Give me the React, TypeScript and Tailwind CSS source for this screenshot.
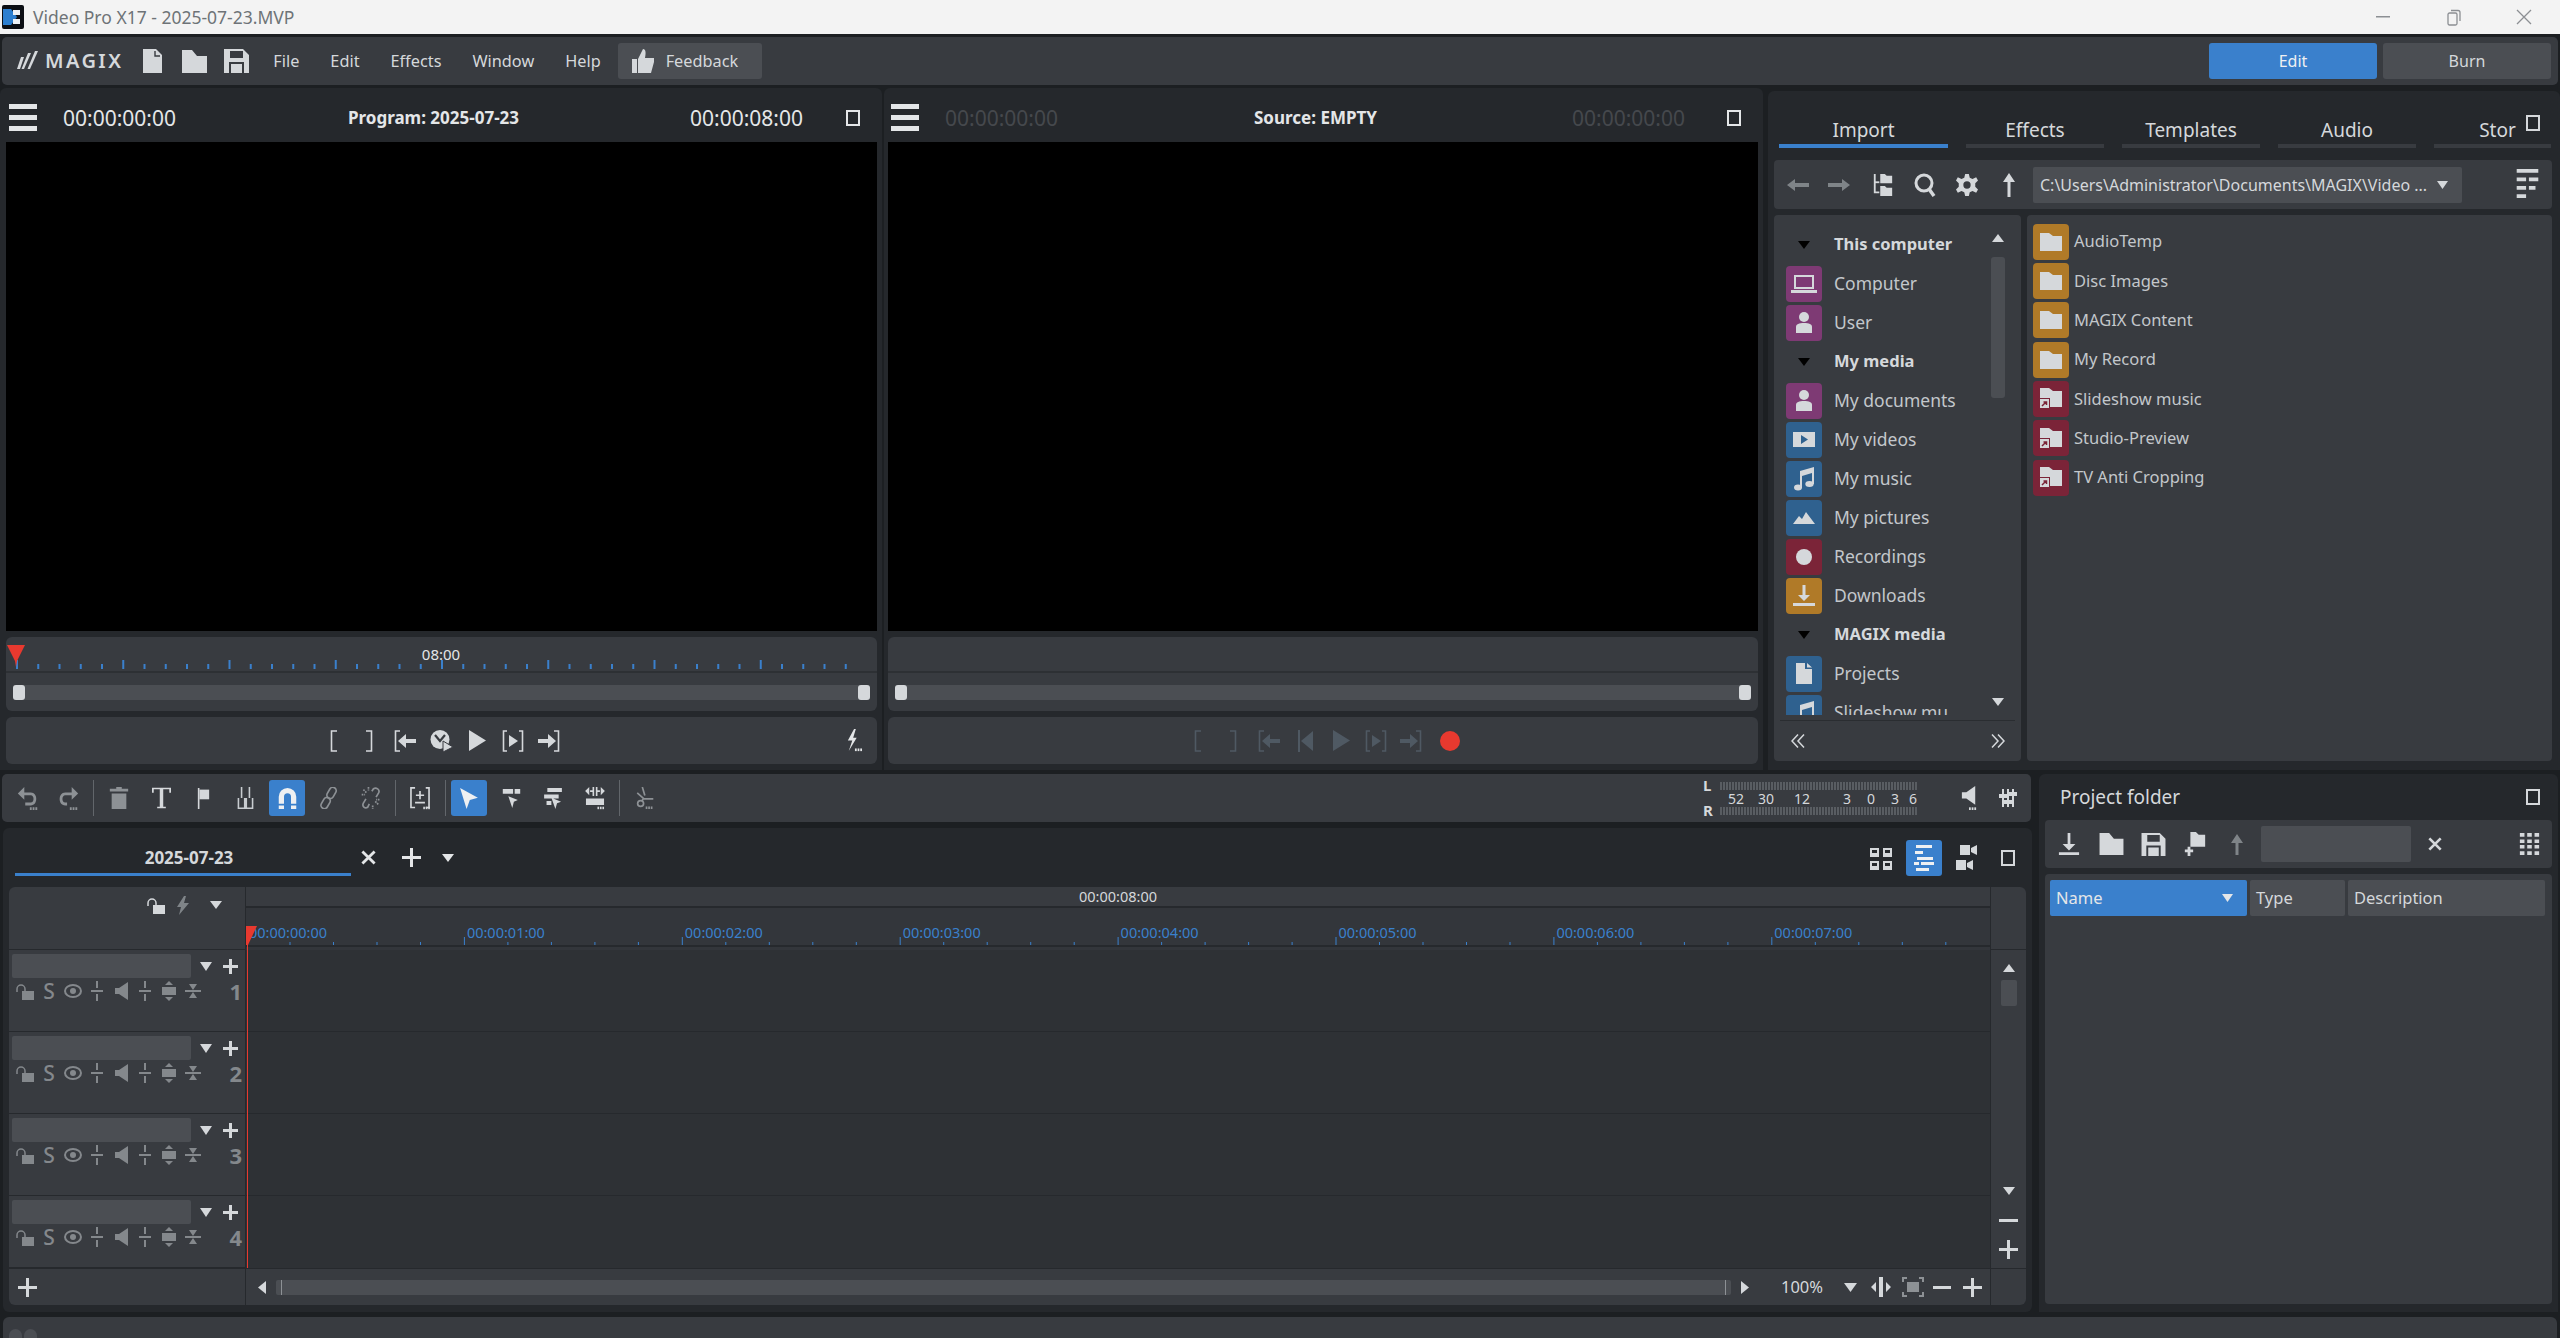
import React from "react";

type SP = { w: number; h: number; vb?: string; className?: string; children: React.ReactNode };
function S({ w, h, vb, className, children }: SP) {
  return (
    <svg width={w} height={h} viewBox={vb ?? `0 0 ${w} ${h}`} fill="currentColor" className={className ?? "shrink-0"}>
      {children}
    </svg>
  );
}
const Dots = ({ x, y }: { x: number; y: number }) => (
  <g>
    <rect x={x} y={y} width="2" height="3" />
    <rect x={x + 3} y={y} width="2" height="3" />
    <rect x={x + 6} y={y} width="2" height="3" />
  </g>
);
const Caret = ({ w = 14, h = 9, up = false }: { w?: number; h?: number; up?: boolean }) => (
  <S w={w} h={h}>
    <path d={up ? `M0 ${h}L${w / 2} 0L${w} ${h}z` : `M0 0H${w}L${w / 2} ${h}z`} />
  </S>
);
const Plus = ({ s = 20, t = 3 }: { s?: number; t?: number }) => (
  <S w={s} h={s}>
    <rect x={(s - t) / 2} width={t} height={s} />
    <rect y={(s - t) / 2} width={s} height={t} />
  </S>
);
const Cross = ({ s = 16 }: { s?: number }) => (
  <S w={s} h={s} vb="0 0 16 16">
    <path d="M1.5 1.5L14.5 14.5M14.5 1.5L1.5 14.5" stroke="currentColor" strokeWidth="3" />
  </S>
);
const Square = () => (
  <S w={14} h={16}>
    <rect x="1" y="1" width="12" height="14" fill="none" stroke="currentColor" strokeWidth="2" />
  </S>
);
const Hamburger = () => (
  <S w={28} h={27}>
    <rect width="28" height="5" />
    <rect y="11" width="28" height="5" />
    <rect y="22" width="28" height="5" />
  </S>
);
const FileIc = () => (
  <S w={19} h={24}>
    <path d="M0 0H13L19 6V24H0z" />
    <path d="M12 2V7H17" fill="none" stroke="#383b40" strokeWidth="1.4" />
  </S>
);
const FolderIc = ({ w = 25, h = 23 }: { w?: number; h?: number }) => (
  <S w={w} h={h} vb="0 0 25 23">
    <path d="M0 0H10L15 6H25V23H0z" />
  </S>
);
const SaveIc = ({ w = 25, h = 24 }: { w?: number; h?: number }) => (
  <S w={w} h={h} vb="0 0 25 24">
    <path fillRule="evenodd" d="M0 0H19L25 6V24H0zM6 2V9H19V2zM5 13H20V24H18V15H7V24H5z" />
  </S>
);
const ThumbIc = () => (
  <S w={22} h={24} vb="0 0 22 24">
    <path d="M0 10H5V24H0zM6 10L11 0C14 0 14 4 13 9H22V13L19 24H6z" />
  </S>
);
const UpArrow = ({ h = 24, dim = false }: { h?: number; dim?: boolean }) => (
  <S w={14} h={h} className={dim ? "shrink-0 text-[#7f8488]" : "shrink-0"}>
    <path d={`M7 0L13 9H8.5V${h}H5.5V9H1z`} />
  </S>
);

/* folder glyphs for the browser panel */
const GFolder = () => (
  <S w={22} h={18} vb="0 0 22 18">
    <path d="M0 0H9L13 3H22V18H0z" />
  </S>
);
const GShortcut = () => (
  <S w={22} h={21} vb="0 0 22 21">
    <path d="M0 0H9L13 3H22V19H0z" />
    <rect x="-1" y="10" width="11" height="11" fill="#7b2438" />
    <rect y="11" width="9" height="9" />
    <path d="M2 18L6 14M3.5 14H6.5V17" stroke="#7b2438" strokeWidth="1.5" fill="none" />
  </S>
);
const GLaptop = () => (
  <S w={26} h={18} vb="0 0 26 18">
    <path fillRule="evenodd" d="M3 0H23V14H3zM5 2V12H21V2z" />
    <path d="M0 15H26V18H0z" />
  </S>
);
const GUser = () => (
  <S w={16} h={21} vb="0 0 16 21">
    <circle cx="8" cy="5" r="5" />
    <path d="M0 21V15C0 12 3 11 8 11S16 12 16 15V21z" />
  </S>
);
const GVideo = () => (
  <S w={22} h={15} vb="0 0 22 15">
    <path fillRule="evenodd" d="M0 0H22V15H0zM8 3V12L15 7.5z" />
  </S>
);
const GMusic = () => (
  <S w={20} h={24} vb="0 0 20 24">
    <path d="M6 4L20 0V17H18V6L8 9V21H6z" />
    <ellipse cx="4" cy="20.5" rx="4" ry="3" />
    <ellipse cx="15.5" cy="17" rx="4.2" ry="3" />
  </S>
);
const GPic = () => (
  <S w={22} h={12} vb="0 0 22 12">
    <path d="M0 12L6 4L9 7L13 0L22 12z" />
  </S>
);
const GRec = () => (
  <S w={16} h={16}>
    <circle cx="8" cy="8" r="8" />
  </S>
);
const GDown = () => (
  <S w={22} h={21} vb="0 0 22 21">
    <path d="M9.5 0H12.5V10H17L11 16L5 10H9.5z" />
    <rect y="18" width="22" height="3" />
  </S>
);
const GDoc = () => (
  <S w={16} h={21} vb="0 0 16 21">
    <path d="M0 0H9V6H16V21H0zM11 0L16 4.5H11z" />
  </S>
);

type Row = { h?: string; t?: string; g?: React.ReactNode; c?: string };
const tree: Row[] = [
  { h: "This computer" },
  { t: "Computer", g: <GLaptop />, c: "bg-[#7e3a74]" },
  { t: "User", g: <GUser />, c: "bg-[#7e3a74]" },
  { h: "My media" },
  { t: "My documents", g: <GUser />, c: "bg-[#7e3a74]" },
  { t: "My videos", g: <GVideo />, c: "bg-[#2f618f]" },
  { t: "My music", g: <GMusic />, c: "bg-[#2f618f]" },
  { t: "My pictures", g: <GPic />, c: "bg-[#2f618f]" },
  { t: "Recordings", g: <GRec />, c: "bg-[#7b2438]" },
  { t: "Downloads", g: <GDown />, c: "bg-[#b07a28]" },
  { h: "MAGIX media" },
  { t: "Projects", g: <GDoc />, c: "bg-[#2f618f]" },
  { t: "Slideshow mu", g: <GMusic />, c: "bg-[#2f618f]" },
];
const files: [string, boolean][] = [
  ["AudioTemp", false],
  ["Disc Images", false],
  ["MAGIX Content", false],
  ["My Record", false],
  ["Slideshow music", true],
  ["Studio-Preview", true],
  ["TV Anti Cropping", true],
];

/* transport glyphs */
const BrL = () => (
  <S w={7} h={22}>
    <path d="M7 1H1.5V21H7" fill="none" stroke="currentColor" strokeWidth="1.6" />
  </S>
);
const BrR = () => (
  <S w={7} h={22}>
    <path d="M0 1H5.5V21H0" fill="none" stroke="currentColor" strokeWidth="1.6" />
  </S>
);
const GoIn = () => (
  <S w={22} h={22}>
    <path d="M6 1H1.5V21H6" fill="none" stroke="currentColor" strokeWidth="1.6" />
    <path d="M4 11L12 4V9H22V13H12V18z" />
  </S>
);
const GoOut = () => (
  <S w={22} h={22}>
    <path d="M16 1H20.5V21H16" fill="none" stroke="currentColor" strokeWidth="1.6" />
    <path d="M18 11L10 4V9H0V13H10V18z" />
  </S>
);
const Clock = () => (
  <S w={23} h={22}>
    <circle cx="10" cy="9.5" r="9.5" />
    <path d="M5 5L10 11L15 5" fill="none" stroke="#383b40" strokeWidth="2.2" />
    <path d="M13 11L23 17L13 22z" stroke="#383b40" strokeWidth="1" />
  </S>
);
const PlayT = () => (
  <S w={17} h={21}>
    <path d="M0 0L17 10.5L0 21z" />
  </S>
);
const PlayBr = () => (
  <S w={22} h={22}>
    <path d="M5 1H1.5V21H5M17 1H20.5V21H17" fill="none" stroke="currentColor" strokeWidth="1.6" />
    <path d="M7 5L16 11L7 17z" />
  </S>
);
const PrevFrame = () => (
  <S w={15} h={22}>
    <rect width="2" height="22" />
    <path d="M15 1V21L3 11z" />
  </S>
);
const Bolt = () => (
  <S w={19} h={23} vb="0 0 19 26">
    <path d="M9 0L2 13H7L3 25L12 10H8L11 0z" />
    <Dots x={10} y={22} />
  </S>
);

function Monitor({ title, a, b, dim, panelW, source }: { title: string; a: string; b: string; dim?: boolean; panelW: string; source?: boolean }) {
  const ticks = Array.from({ length: 40 }, (_, i) => i);
  return (
    <div className={`${panelW} h-[682px] bg-[#25282c] rounded-t-[6px] flex flex-col shrink-0`}>
      <div className="h-[54px] pt-[5px] flex items-center text-[#e4e6e8] shrink-0">
        <div className={source ? "ml-[7px]" : "ml-[9px]"}>
          <Hamburger />
        </div>
        <div className={`ml-[26px] w-[114px] text-[21px] leading-[28px] ${dim ? "text-[#45484d]" : ""}`}>{a}</div>
        <div className={`flex-1 text-center font-bold text-[17px] leading-[24px]`}>{title}</div>
        <div className={`w-[114px] text-[21px] leading-[28px] ${dim ? "text-[#45484d]" : ""}`}>{b}</div>
        <div className={source ? "ml-[41px] mr-[22px]" : "ml-[42px] mr-[22px]"}>
          <Square />
        </div>
      </div>
      <div className={`${source ? "ml-[4px] w-[870px]" : "ml-[6px] w-[871px]"} h-[489px] bg-black shrink-0`} />
      <div className={`${source ? "ml-[4px] w-[870px]" : "ml-[6px] w-[871px]"} mt-[6px] h-[74px] bg-[#383b40] rounded-[6px] flex flex-col shrink-0`}>
        <div className="h-[36px] border-b-2 border-[#2d3034] shrink-0">
          {!source && (
            <svg width="869" height="34" viewBox="0 0 869 34" className="block text-[#e4e6e8]">
              {ticks.map((i) => (
                <rect key={i} x={10 + i * 21.25} y={i % 5 === 0 ? 23 : 27} width="2" height={i % 5 === 0 ? 9 : 5} fill="#3a80cc" />
              ))}
              <text x="435" y="23" textAnchor="middle" fontSize="15" fill="#e4e6e8">08:00</text>
              <path d="M1 8H19L11 24L10 30L9 24z" fill="#e8392f" />
            </svg>
          )}
        </div>
        <div className="mt-[12px] mx-[7px] h-[15px] bg-[#4b4e53] flex justify-between rounded-[2px]">
          <div className="w-[12px] h-[15px] bg-[#d5d8db] rounded-[3px]" />
          <div className="w-[12px] h-[15px] bg-[#d5d8db] rounded-[3px]" />
        </div>
      </div>
      <div className={`${source ? "ml-[4px] w-[870px]" : "ml-[6px] w-[871px]"} mt-[6px] h-[47px] bg-[#383b40] rounded-[6px] flex items-center shrink-0`}>
        {source ? (
          <div className="flex items-center ml-[291px] text-[#4f5963]">
            <div className="w-[36px] flex justify-center"><BrL /></div>
            <div className="w-[36px] flex justify-center"><BrR /></div>
            <div className="w-[36px] flex justify-center"><GoIn /></div>
            <div className="w-[36px] flex justify-center"><PrevFrame /></div>
            <div className="w-[36px] flex justify-center"><PlayT /></div>
            <div className="w-[34px] flex justify-center"><PlayBr /></div>
            <div className="w-[36px] flex justify-center"><GoOut /></div>
            <div className="ml-[11px] w-[20px] h-[20px] rounded-full bg-[#e8392f]" />
          </div>
        ) : (
          <>
            <div className="flex items-center ml-[309px] text-[#d5d8db]">
              <div className="w-[36px] flex justify-center"><BrL /></div>
              <div className="w-[36px] flex justify-center"><BrR /></div>
              <div className="w-[36px] flex justify-center"><GoIn /></div>
              <div className="w-[36px] flex justify-center"><Clock /></div>
              <div className="w-[36px] flex justify-center"><PlayT /></div>
              <div className="w-[36px] flex justify-center"><PlayBr /></div>
              <div className="w-[36px] flex justify-center"><GoOut /></div>
            </div>
            <div className="ml-auto mr-[13px] text-[#e4e6e8]"><Bolt /></div>
          </>
        )}
      </div>
    </div>
  );
}

function TreePanel() {
  return (
    <div className="w-[247px] h-[546px] bg-[#383b40] rounded-[4px] flex flex-col shrink-0">
      <div className="h-[505px] pt-[10px] flex">
        <div className="w-[208px] h-[490px] overflow-hidden shrink-0">
          {tree.map((r, i) =>
            r.h ? (
              <div key={i} className="h-[39px] flex items-center">
                <div className="w-[60px] flex justify-center"><Caret w={12} h={8} /></div>
                <div className="font-bold text-[16.5px] text-[#d5d8db]">{r.h}</div>
              </div>
            ) : (
              <div key={i} className="h-[39px] flex items-center">
                <div className={`ml-[12px] w-[36px] h-[36px] rounded-[4px] ${r.c} text-[#d5d8db] flex items-center justify-center`}>{r.g}</div>
                <div className="ml-[12px] text-[17.5px] text-[#c3c7cb] whitespace-nowrap">{r.t}</div>
              </div>
            )
          )}
        </div>
        <div className="w-[24px] ml-[4px] flex flex-col items-center h-[490px] text-[#d5d8db]">
          <div className="mt-[9px]"><Caret w={12} h={8} up /></div>
          <div className="mt-[15px] w-[14px] h-[141px] bg-[#4b4e53] rounded-[3px]" />
          <div className="mt-[300px]"><Caret w={12} h={8} /></div>
        </div>
      </div>
      <div className="h-[1px] mx-[6px] bg-[#2a2d31]" />
      <div className="flex-1 flex items-center justify-between pl-[17px] pr-[16px] text-[#d5d8db]">
        <svg width="14" height="14" viewBox="0 0 14 14" fill="none" stroke="currentColor" strokeWidth="1.5"><path d="M7 0.5L1 7L7 13.5M13 0.5L7 7L13 13.5" /></svg>
        <svg width="14" height="14" viewBox="0 0 14 14" fill="none" stroke="currentColor" strokeWidth="1.5"><path d="M1 0.5L7 7L1 13.5M7 0.5L13 7L7 13.5" /></svg>
      </div>
    </div>
  );
}

function Browser() {
  return (
    <div className="relative w-[792px] h-[679px] mt-[3px] ml-[5px] bg-[#25282c] rounded-t-[6px] flex flex-col shrink-0">
      <div className="pt-[19px] pl-[11px] flex gap-[18px] text-[19px] text-[#d5d8db]">
        <div className="w-[169px] h-[38px] pt-[7px] border-b-[4px] border-[#3a80cc] text-center leading-[26px]">Import</div>
        <div className="w-[138px] h-[38px] pt-[7px] border-b-[4px] border-[#383b40] text-center leading-[26px]">Effects</div>
        <div className="w-[138px] h-[38px] pt-[7px] border-b-[4px] border-[#383b40] text-center leading-[26px]">Templates</div>
        <div className="w-[138px] h-[38px] pt-[7px] border-b-[4px] border-[#383b40] text-center leading-[26px]">Audio</div>
        <div className="w-[117px] h-[38px] pt-[7px] border-b-[4px] border-[#383b40] text-center leading-[26px] pl-[10px]">Stor</div>
      </div>
      <div className="absolute top-[24px] left-[758px] text-[#d5d8db]"><Square /></div>
      <div className="mt-[12px] ml-[6px] w-[778px] h-[49px] bg-[#383b40] rounded-[4px] flex items-center text-[#d5d8db] shrink-0">
        <div className="w-[48px] flex justify-center text-[#7f8488]">
          <S w={22} h={14}><path d="M0 7L8 1V5H22V9H8V13z" /></S>
        </div>
        <div className="w-[34px] flex justify-center text-[#7f8488]">
          <S w={22} h={14}><path d="M22 7L14 1V5H0V9H14V13z" /></S>
        </div>
        <div className="w-[42px] ml-[6px] flex justify-center">
          <S w={20} h={22} vb="0 0 20 24">
            <path d="M1 0V20H6" fill="none" stroke="currentColor" strokeWidth="2" />
            <path d="M1 9H6" stroke="currentColor" strokeWidth="2" />
            <path d="M7 0H12L14 2H20V10H7zM7 13H12L14 15H20V24H7z" />
          </S>
        </div>
        <div className="w-[42px] flex justify-center">
          <S w={22} h={24}>
            <circle cx="10" cy="10" r="8" fill="none" stroke="currentColor" strokeWidth="3" />
            <path d="M15 16L20 23" stroke="currentColor" strokeWidth="3.5" />
          </S>
        </div>
        <div className="w-[42px] flex justify-center">
          <S w={22} h={22} vb="0 0 24 24">
            <path fillRule="evenodd" d="M10 0H14L15 4L18 5.5L22 3.5L24 7L21 10V14L24 17L22 20.5L18 18.5L15 20L14 24H10L9 20L6 18.5L2 20.5L0 17L3 14V10L0 7L2 3.5L6 5.5L9 4zM12 8A4 4 0 1 0 12 16A4 4 0 1 0 12 8z" />
          </S>
        </div>
        <div className="w-[42px] flex justify-center"><UpArrow h={24} /></div>
        <div className="ml-[3px] w-[429px] h-[36px] bg-[#4b4e53] rounded-[2px] flex items-center pl-[7px] text-[16px] text-[#d5d8db] whitespace-nowrap">
          <span className="w-[397px] overflow-hidden">C:\Users\Administrator\Documents\MAGIX\Video ...</span>
          <Caret w={11} h={8} />
        </div>
        <div className="ml-[54px]">
          <S w={23} h={31} vb="0 0 23 33">
            <path d="M0 0H23V4H0zM0 9H10V13H0zM13 9H23V13H13zM0 18H10V22H0zM13 18H20V22H13zM0 27H10V31H0z" />
          </S>
        </div>
      </div>
      <div className="mt-[6px] ml-[6px] flex gap-[6px]">
        <TreePanel />
        <div className="w-[525px] h-[546px] bg-[#383b40] rounded-[4px] pt-[7px] shrink-0">
          {files.map(([t, s]) => (
            <div key={t} className="h-[39.33px] flex items-center">
              <div className={`ml-[6px] w-[36px] h-[36px] rounded-[4px] ${s ? "bg-[#7b2438]" : "bg-[#b07a28]"} text-[#d5d8db] flex items-center justify-center`}>
                {s ? <GShortcut /> : <GFolder />}
              </div>
              <div className="ml-[5px] text-[16.5px] text-[#c3c7cb]">{t}</div>
            </div>
          ))}
        </div>
      </div>
    </div>
  );
}

const Sep = ({ cls }: { cls: string }) => <div className={`w-[1px] h-[36px] bg-[#62666b] shrink-0 ${cls}`} />;
const Slot = ({ w, children, cls }: { w: string; children: React.ReactNode; cls?: string }) => (
  <div className={`${w} flex items-center justify-center shrink-0 ${cls ?? ""}`}>{children}</div>
);

function Toolbar() {
  return (
    <div className="w-[2029px] h-[48px] bg-[#383b40] rounded-[5px] flex items-center pl-[6px] text-[#8d9195]">
      <Slot w="w-[40px]">
        <S w={24} h={24} vb="0 0 24 26">
          <path d="M8 1L1 8L8 15V10H15C19 10 19 18 15 18H9V21H15C23 21 23 7 15 7H8z" />
          <Dots x={14} y={23} />
        </S>
      </Slot>
      <Slot w="w-[40px]">
        <S w={24} h={24} vb="0 0 24 26">
          <path d="M16 1L23 8L16 15V10H9C5 10 5 18 9 18H11V21H9C1 21 1 7 9 7H16z" />
          <Dots x={14} y={23} />
        </S>
      </Slot>
      <Sep cls="ml-[5px]" />
      <Slot w="w-[42px]" cls="ml-[4px]">
        <S w={20} h={22} vb="0 0 20 24">
          <path d="M7 0H13V2H20V5H0V2H7zM2 7H18V24H2z" />
        </S>
      </Slot>
      <Slot w="w-[42px]" cls="text-[#d5d8db]">
        <S w={19} h={22} vb="0 0 22 24">
          <path d="M0 0H22V6H20V2H13V22H16V24H6V22H9V2H2V6H0z" />
        </S>
      </Slot>
      <Slot w="w-[42px]" cls="text-[#d5d8db]">
        <S w={13} h={21} vb="0 0 14 26">
          <rect width="2" height="26" />
          <path d="M2 2H14V14H2z" />
        </S>
      </Slot>
      <Slot w="w-[42px]" cls="text-[#c8ccd0]">
        <S w={19} h={22} vb="0 0 20 28">
          <path d="M4 0H6V14H4zM14 0H16V14H14z" />
          <path d="M1 14V27H9V14M11 14V27H19V14" fill="none" stroke="currentColor" strokeWidth="2" />
        </S>
      </Slot>
      <div className="ml-[3px] w-[36px] h-[36px] bg-[#3a80cc] rounded-[3px] flex items-center justify-center text-[#eef0f2] shrink-0">
        <S w={19} h={21} vb="0 0 20 24">
          <path d="M0 10A10 10 0 0 1 20 10V18H14V10A4 4 0 0 0 6 10V18H0z" />
          <rect y="20" width="6" height="4" />
          <rect x="14" y="20" width="6" height="4" />
        </S>
      </div>
      <Slot w="w-[42px]" cls="ml-[3px]">
        <S w={22} h={22} vb="0 0 22 26">
          <g fill="none" stroke="currentColor" strokeWidth="2">
            <rect x="10" y="0" width="8" height="14" rx="4" transform="rotate(30 14 7)" />
            <rect x="3" y="12" width="8" height="14" rx="4" transform="rotate(30 7 19)" />
          </g>
        </S>
      </Slot>
      <Slot w="w-[42px]">
        <S w={22} h={22} vb="0 0 24 26">
          <g fill="none" stroke="currentColor" strokeWidth="2">
            <path d="M13 5L15 2C18 0 23 3 21 7L18 12" />
            <path d="M10 20L8 24C5 26 1 23 3 19L6 14" />
            <path d="M3 3L7 7M1 9H5M9 0V4M17 17L21 21M22 15H18M14 22V26" strokeDasharray="2 1" />
          </g>
        </S>
      </Slot>
      <Sep cls="ml-[3px]" />
      <Slot w="w-[40px]" cls="ml-[4px] text-[#d5d8db]">
        <S w={22} h={23} vb="0 0 24 28">
          <path d="M6 1H1V25H6M19 1H23V25H19" fill="none" stroke="currentColor" strokeWidth="2" />
          <path d="M11 5H13V9H17V11H13V15H11V11H7V9H11zM6 18H18V20H6z" />
          <Dots x={16} y={24} />
        </S>
      </Slot>
      <Sep cls="ml-[5px]" />
      <div className="ml-[5px] w-[36px] h-[36px] bg-[#3a80cc] rounded-[3px] flex items-center justify-center text-[#eef0f2] shrink-0">
        <S w={20} h={21} vb="0 0 22 26">
          <path d="M0 0L22 12L12 15L8 26z" />
        </S>
      </div>
      <Slot w="w-[42px]" cls="ml-[3px] text-[#d5d8db]">
        <S w={21} h={19} vb="0 0 22 24">
          <path d="M0 0H13V6H0zM15 0H22V6H15zM7 9L19 14L14 16L12 24z" />
        </S>
      </Slot>
      <Slot w="w-[42px]" cls="text-[#d5d8db]">
        <S w={22} h={21} vb="0 0 22 26">
          <path d="M4 0H22V5H4zM0 8H18V13H0zM3 16H9V21H3zM9 12L21 17L16 19L14 26z" />
        </S>
      </Slot>
      <Slot w="w-[42px]" cls="text-[#d5d8db]">
        <S w={22} h={23} vb="0 0 24 28">
          <path d="M0 5L5 0V10zM24 5L19 0V10zM9 0H11V11H9zM13 0H15V11H13zM6 4H9V6H6zM15 4H18V6H15zM1 14H23V22H1z" />
          <Dots x={15} y={24} />
        </S>
      </Slot>
      <Sep cls="ml-[3px]" />
      <Slot w="w-[40px]" cls="ml-[4px]">
        <S w={22} h={22} vb="0 0 24 26">
          <path d="M10 0L13 10M4 7L12 14M12 14H23M8 16A3.5 3.5 0 1 0 8 23A3.5 3.5 0 1 0 8 16M12 13L9 17" fill="none" stroke="currentColor" strokeWidth="2" />
          <Dots x={14} y={23} />
        </S>
      </Slot>

      <div className="ml-auto flex items-center">
        <svg width="222" height="42" viewBox="0 0 222 42" className="shrink-0 block">
          <defs>
            <pattern id="led" width="3" height="8" patternUnits="userSpaceOnUse">
              <rect width="2" height="8" fill="#595d62" />
            </pattern>
          </defs>
          <text x="1" y="14" fontSize="15" fontWeight="700" fill="#d5d8db">L</text>
          <text x="1" y="39" fontSize="15" fontWeight="700" fill="#d5d8db">R</text>
          <rect x="17" y="5" width="198" height="8" fill="url(#led)" />
          <rect x="17" y="30" width="198" height="8" fill="url(#led)" />
          {[["52", 34], ["30", 64], ["12", 100], ["3", 145], ["0", 169], ["3", 193], ["6", 211]].map(([t, x], i) => (
            <text key={i} x={x as number} y="27" fontSize="14" textAnchor="middle" fill="#d5d8db">{t}</text>
          ))}
        </svg>
        <div className="ml-[37px] text-[#d5d8db]">
          <S w={16} h={24} vb="0 0 16 27">
            <path d="M0 7H5L15 0V21L5 14H0z" />
            <Dots x={8} y={24} />
          </S>
        </div>
        <div className="ml-[22px] mr-[14px] text-[#d5d8db]">
          <S w={18} h={18}>
            <path d="M3 0H5V18H3zM8 0H10V18H8zM13 0H15V18H13z" />
            <path d="M0 5H8V9H0zM10 3H18V7H10zM5 11H13V15H5z" />
          </S>
        </div>
      </div>
    </div>
  );
}

function RulerSvg() {
  const labels = ["00:00:00:00", "00:00:01:00", "00:00:02:00", "00:00:03:00", "00:00:04:00", "00:00:05:00", "00:00:06:00", "00:00:07:00"];
  return (
    <svg width="1744" height="42" viewBox="0 0 1744 42" className="block">
      <rect y="37" width="1744" height="2" fill="#26292d" />
      {labels.map((t, i) => (
        <g key={t}>
          <rect x={i * 217.9} y="29" width="1" height="8" fill="#3a80cc" />
          {[1, 2, 3, 4].map((k) => (
            <rect key={k} x={i * 217.9 + k * 43.5} y="34" width="1" height="3" fill="#3a80cc" />
          ))}
          <text x={i * 217.9 + 3} y="30" fontSize="14.5" fill="#3a80cc">{t}</text>
        </g>
      ))}
    </svg>
  );
}

function Track({ n, h }: { n: number; h: string }) {
  return (
    <div className={`${h} border-b border-[#26292d] shrink-0 overflow-hidden`}>
      <div className="flex items-center mt-[4px]">
        <div className="ml-[3px] w-[179px] h-[24px] bg-[#4b4e53] rounded-[2px]" />
        <div className="ml-[9px] text-[#d5d8db]"><Caret w={12} h={9} /></div>
        <div className="ml-[11px] text-[#d5d8db]"><Plus s={15} t={3} /></div>
      </div>
      <div className="flex items-center mt-[2px] h-[22px] pl-[4px] pr-[3px] text-[#84888c]">
        <Slot w="w-[24px]">
          <S w={18} h={17}>
            <path d="M1 9V6A4 4 0 0 1 9 6V8" fill="none" stroke="currentColor" strokeWidth="1.5" />
            <rect x="6" y="8" width="12" height="9" />
          </S>
        </Slot>
        <Slot w="w-[24px]"><span className="text-[21px] font-medium leading-[22px]">S</span></Slot>
        <Slot w="w-[24px]">
          <S w={18} h={14}>
            <ellipse cx="9" cy="7" rx="8" ry="6" fill="none" stroke="currentColor" strokeWidth="2" />
            <circle cx="9" cy="7" r="3" />
          </S>
        </Slot>
        <Slot w="w-[24px]">
          <S w={12} h={20}>
            <path d="M5 0H7V7H5zM5 13H7V20H5zM0 9H12V11H0z" />
          </S>
        </Slot>
        <Slot w="w-[24px]">
          <S w={13} h={18}>
            <path d="M0 6H4L13 0V18L4 12H0z" />
          </S>
        </Slot>
        <Slot w="w-[24px]">
          <S w={12} h={20}>
            <path d="M5 0H7V7H5zM5 13H7V20H5zM0 9H12V11H0z" />
          </S>
        </Slot>
        <Slot w="w-[24px]">
          <S w={16} h={20}>
            <path d="M8 0L12 4H4zM8 20L12 16H4zM1 6H15V14H1z" />
          </S>
        </Slot>
        <Slot w="w-[24px]">
          <S w={16} h={18}>
            <path d="M8 8L4 2H12zM8 10L4 16H12zM0 8H16V10H0z" />
          </S>
        </Slot>
        <span className="ml-auto text-[22px] font-bold leading-[22px] w-[14px] text-right">{n}</span>
      </div>
    </div>
  );
}

function Timeline() {
  return (
    <div className="mt-[6px] ml-[1px] w-[2029px] h-[484px] bg-[#25282c] rounded-[6px] flex flex-col">
      <div className="h-[59px] flex items-start text-[#e4e6e8] shrink-0">
        <div className="ml-[12px] mt-[16px] w-[336px] h-[32px] border-b-[3px] border-[#3a80cc] text-center font-bold text-[17px] leading-[28px] pl-[12px] text-[#d5d8db]">2025-07-23</div>
        <div className="ml-[10px] mt-[22px]"><Cross s={15} /></div>
        <div className="ml-[26px] mt-[20px]"><Plus s={19} t={3} /></div>
        <div className="ml-[21px] mt-[26px]"><Caret w={12} h={8} /></div>
        <div className="ml-auto mt-[20px] text-[#d5d8db]">
          <S w={22} h={22}>
            <path fillRule="evenodd" d="M0 0H9V9H0zM2 2V5H7V2zM13 0H22V9H13zM15 2V5H20V2zM0 13H9V22H0zM2 15V18H7V15zM13 13H22V22H13zM15 15V18H20V15z" />
          </S>
        </div>
        <div className="ml-[14px] mt-[12px] w-[36px] h-[36px] bg-[#3a80cc] rounded-[3px] flex items-center justify-center text-[#eef0f2]">
          <S w={22} h={26}>
            <path d="M3 0H19V3H3zM2 6H10V9H2zM4 12H20V15H4zM1 17H6V20H1zM8 17H21V20H8zM3 23H16V26H3z" />
          </S>
        </div>
        <div className="ml-[14px] mt-[17px] text-[#d5d8db]">
          <S w={22} h={27}>
            <path d="M4 0H14V10H4zM15 3L21 0V10L15 7zM0 15H10V25H0zM11 18L17 15V25L11 22z" />
          </S>
        </div>
        <div className="ml-[23px] mr-[17px] mt-[22px] text-[#d5d8db]"><Square /></div>
      </div>
      <div className="ml-[6px] w-[2017px] h-[418px] rounded-[6px] overflow-hidden flex flex-col bg-[#383b40] shrink-0">
        <div className="flex h-[381px]">
          <div className="w-[236px] shrink-0 flex flex-col text-[#d5d8db]">
            <div className="h-[63px] flex items-start border-b border-[#26292d] shrink-0">
              <div className="ml-[138px] mt-[10px]">
                <S w={18} h={17}>
                  <path d="M1 9V6A4 4 0 0 1 9 6V8" fill="none" stroke="currentColor" strokeWidth="1.5" />
                  <rect x="6" y="8" width="12" height="9" />
                </S>
              </div>
              <div className="ml-[12px] mt-[9px] text-[#7f8488]">
                <S w={12} h={19}><path d="M7 0L0 11H4L2 19L12 7H7L9 0z" /></S>
              </div>
              <div className="ml-[21px] mt-[14px]"><Caret w={12} h={8} /></div>
            </div>
            <Track n={1} h="h-[82px]" />
            <Track n={2} h="h-[82px]" />
            <Track n={3} h="h-[82px]" />
            <Track n={4} h="h-[72px]" />
          </div>
          <div className="relative w-[1745px] shrink-0 border-l border-[#26292d] flex flex-col">
            <div className="h-[19px] border-b-2 border-[#26292d] text-center text-[14.5px] leading-[18px] text-[#d5d8db] shrink-0 box-content">00:00:08:00</div>
            <div className="h-[42px] bg-[#33363b] shrink-0"><RulerSvg /></div>
            <div className="flex-1 bg-[#2e3135] flex flex-col">
              <div className="h-[82px] border-b border-[#26292d]" />
              <div className="h-[82px] border-b border-[#26292d]" />
              <div className="h-[82px] border-b border-[#26292d]" />
            </div>
            <svg width="12" height="342" viewBox="0 0 12 342" className="absolute left-0 top-[39px]">
              <path d="M0 0H11L2 19V342H1V19H0z" fill="#e8392f" />
            </svg>
          </div>
          <div className="w-[36px] shrink-0 border-l border-[#26292d] flex flex-col items-center text-[#d5d8db]">
            <div className="h-[63px] w-full border-b border-[#26292d] shrink-0" />
            <div className="mt-[14px]"><Caret w={12} h={8} up /></div>
            <div className="mt-[8px] w-[16px] h-[26px] bg-[#4b4e53] rounded-[2px]" />
            <div className="mt-[181px]"><Caret w={12} h={8} /></div>
            <div className="mt-[24px] w-[19px] h-[3px] bg-[#d5d8db]" />
            <div className="mt-[18px]"><Plus s={19} t={3} /></div>
          </div>
        </div>
        <div className="flex-1 flex border-t border-[#26292d] text-[#d5d8db]">
          <div className="w-[236px] shrink-0 flex items-center pl-[9px]"><Plus s={19} t={3} /></div>
          <div className="flex-1 border-l border-[#26292d] flex items-center">
            <div className="ml-[12px]"><S w={8} h={13}><path d="M8 0V13L0 6.5z" /></S></div>
            <div className="ml-[10px] w-[1455px] h-[15px] bg-[#4b4e53] rounded-[2px] flex justify-between px-[5px]">
              <div className="w-[1px] h-[15px] bg-[#8d9195]" />
              <div className="w-[1px] h-[15px] bg-[#8d9195]" />
            </div>
            <div className="ml-[10px]"><S w={8} h={13}><path d="M0 0V13L8 6.5z" /></S></div>
            <div className="ml-[31px] w-[44px] text-[16.5px] leading-[20px] text-center whitespace-nowrap">100%</div>
            <div className="ml-[20px]"><Caret w={13} h={9} /></div>
            <div className="ml-[14px]">
              <S w={20} h={20}><path d="M0 10L5 5V15zM20 10L15 5V15zM8 0H12V20H8z" /></S>
            </div>
            <div className="ml-[11px] text-[#8d9195]">
              <S w={22} h={20}><path d="M5 5H17V15H5zM0 0H5V2H2V5H0zM22 0H17V2H20V5H22zM0 20H5V18H2V15H0zM22 20H17V18H20V15H22z" /></S>
            </div>
            <div className="ml-[9px] w-[18px] h-[3px] bg-[#d5d8db]" />
            <div className="ml-[12px]"><Plus s={19} t={3} /></div>
          </div>
          <div className="w-[36px] shrink-0 border-l border-[#26292d]" />
        </div>
      </div>
    </div>
  );
}

function ProjectFolder() {
  return (
    <div className="ml-[6px] w-[519px] h-[538px] bg-[#25282c] rounded-t-[6px] flex flex-col shrink-0">
      <div className="h-[46px] flex items-center text-[19px] text-[#d5d8db] shrink-0">
        <div className="ml-[21px]">Project folder</div>
        <div className="ml-auto mr-[18px]"><Square /></div>
      </div>
      <div className="ml-[6px] w-[507px] h-[48px] bg-[#383b40] rounded-[4px] flex items-center text-[#d5d8db] shrink-0">
        <Slot w="w-[42px]" cls="ml-[3px]">
          <S w={22} h={22} vb="0 0 22 24"><path d="M9.5 0H12.5V12H18L11 19L4 12H9.5zM0 21H22V24H0z" /></S>
        </Slot>
        <Slot w="w-[42px]"><FolderIc w={25} h={22} /></Slot>
        <Slot w="w-[42px]"><SaveIc w={25} h={23} /></Slot>
        <Slot w="w-[42px]">
          <S w={22} h={24} vb="0 0 22 26">
            <path d="M6 0H12L15 3H22V16H6z" />
            <path d="M3 16H6V19H9V22H6V26H3V22H0V19H3z" />
          </S>
        </Slot>
        <Slot w="w-[42px]"><UpArrow h={21} dim /></Slot>
        <div className="ml-[3px] w-[150px] h-[36px] bg-[#4b4e53] rounded-[2px] shrink-0" />
        <div className="ml-[17px]"><Cross s={14} /></div>
        <div className="ml-auto mr-[12px]">
          <S w={21} h={22} vb="0 0 21 24">
            <path d="M0 0H5V4H0zM8 0H13V4H8zM16 0H21V4H16zM0 7H5V11H0zM8 7H13V11H8zM16 7H21V11H16zM0 13H5V17H0zM8 13H13V17H8zM16 13H21V17H16zM0 20H5V24H0zM8 20H13V24H8zM16 20H21V24H16z" />
          </S>
        </div>
      </div>
      <div className="mt-[6px] ml-[6px] w-[507px] h-[430px] bg-[#383b40] rounded-[4px] pt-[6px] pl-[5px] flex gap-[3px] items-start shrink-0">
        <div className="w-[197px] h-[36px] bg-[#3a80cc] rounded-[2px] flex items-center pl-[6px] pr-[14px] justify-between text-[16.5px] text-[#e4e6e8]">
          <span>Name</span>
          <Caret w={11} h={8} />
        </div>
        <div className="w-[95px] h-[36px] bg-[#4b4e53] rounded-[2px] flex items-center pl-[6px] text-[16.5px] text-[#d5d8db]">Type</div>
        <div className="w-[197px] h-[36px] bg-[#4b4e53] rounded-[2px] flex items-center pl-[6px] text-[16.5px] text-[#d5d8db]">Description</div>
      </div>
    </div>
  );
}

export default function App() {
  return (
    <div className="w-[2560px] h-[1338px] bg-[#1c1f22] overflow-hidden flex flex-col font-['Noto_Sans',sans-serif]">
      <div className="h-[34px] bg-[#f3f3f3] flex items-center shrink-0 text-[#6e7377]">
        <svg width="22" height="24" viewBox="0 0 22 24" className="ml-[2px] shrink-0">
          <rect width="22" height="24" rx="2" fill="#0c0f14" />
          <path d="M1 4H9L15 12L9 20H1z" fill="#2c7fd0" />
          <rect x="11" y="5" width="7" height="5" fill="#eef2f6" />
          <rect x="11" y="14" width="7" height="5" fill="#eef2f6" />
        </svg>
        <span className="ml-[9px] text-[17.5px] leading-[24px]">Video Pro X17 - 2025-07-23.MVP</span>
        <div className="ml-auto flex items-center text-[#8c8f93]">
          <svg width="14" height="2" viewBox="0 0 14 2" className="mr-[57px]"><rect width="14" height="1.5" fill="currentColor" /></svg>
          <svg width="14" height="17" viewBox="0 0 14 17" fill="none" stroke="currentColor" strokeWidth="1.3" className="mr-[55px]"><rect x="1" y="4" width="9" height="12" rx="1.5" /><path d="M4 1.5H11C12 1.5 13 2.5 13 3.5V12" /></svg>
          <svg width="16" height="16" viewBox="0 0 16 16" fill="none" stroke="currentColor" strokeWidth="1.3" className="mr-[28px]"><path d="M1 1L15 15M15 1L1 15" /></svg>
        </div>
      </div>

      <div className="mt-[3px] mx-[2px] h-[48px] bg-[#383b40] rounded-[5px] flex items-center text-[#d5d8db] shrink-0">
        <svg width="22" height="20" viewBox="0 0 22 20" className="ml-[15px] shrink-0" fill="#d5d8db">
          <path d="M4 6H7L3 18H0z" />
          <path d="M11 2H14L7 18H4.5z" />
          <path d="M18 0H21L13 18H10.5z" />
        </svg>
        <span className="ml-[6px] text-[20px] font-semibold leading-[28px] tracking-[2.4px]">MAGIX</span>
        <div className="ml-[20px]"><FileIc /></div>
        <div className="ml-[20px]"><FolderIc w={25} h={23} /></div>
        <div className="ml-[17px]"><SaveIc /></div>
        <div className="ml-[24px] flex items-center text-[16.3px] leading-[22px] gap-[31px]">
          <span>File</span>
          <span>Edit</span>
          <span>Effects</span>
          <span>Window</span>
          <span>Help</span>
        </div>
        <div className="ml-[17px] w-[144px] h-[36px] bg-[#4b4e53] rounded-[3px] flex items-center pl-[14px] text-[16.3px]">
          <ThumbIc />
          <span className="ml-[12px]">Feedback</span>
        </div>
        <div className="ml-auto w-[168px] h-[36px] bg-[#3a80cc] rounded-[3px] flex items-center justify-center text-[16px] text-[#eef0f2]">Edit</div>
        <div className="ml-[6px] mr-[7px] w-[168px] h-[36px] bg-[#4b4e53] rounded-[3px] flex items-center justify-center text-[16px]">Burn</div>
      </div>

      <div className="mt-[3px] flex h-[682px] shrink-0">
        <Monitor title="Program: 2025-07-23" a="00:00:00:00" b="00:00:08:00" panelW="w-[882px]" />
        <div className="ml-[2px]">
          <Monitor title="Source: EMPTY" a="00:00:00:00" b="00:00:00:00" dim panelW="w-[879px]" source />
        </div>
        <Browser />
      </div>

      <div className="mt-[4px] ml-[2px] flex h-[538px] shrink-0">
        <div className="w-[2031px] flex flex-col shrink-0">
          <Toolbar />
          <Timeline />
        </div>
        <ProjectFolder />
      </div>

      <div className="mt-[5px] mx-[3px] flex-1 bg-[#383b40] rounded-t-[6px] flex items-start pl-[6px] pt-[12px] overflow-hidden">
        <div className="w-[13px] h-[20px] bg-[#4b4e53] rounded-full" />
        <div className="ml-[2px] w-[13px] h-[20px] bg-[#4b4e53] rounded-full" />
        <span className="ml-[14px] mt-[4px] text-[13px] leading-[18px] text-[#d5d8db]">25%</span>
      </div>
    </div>
  );
}
